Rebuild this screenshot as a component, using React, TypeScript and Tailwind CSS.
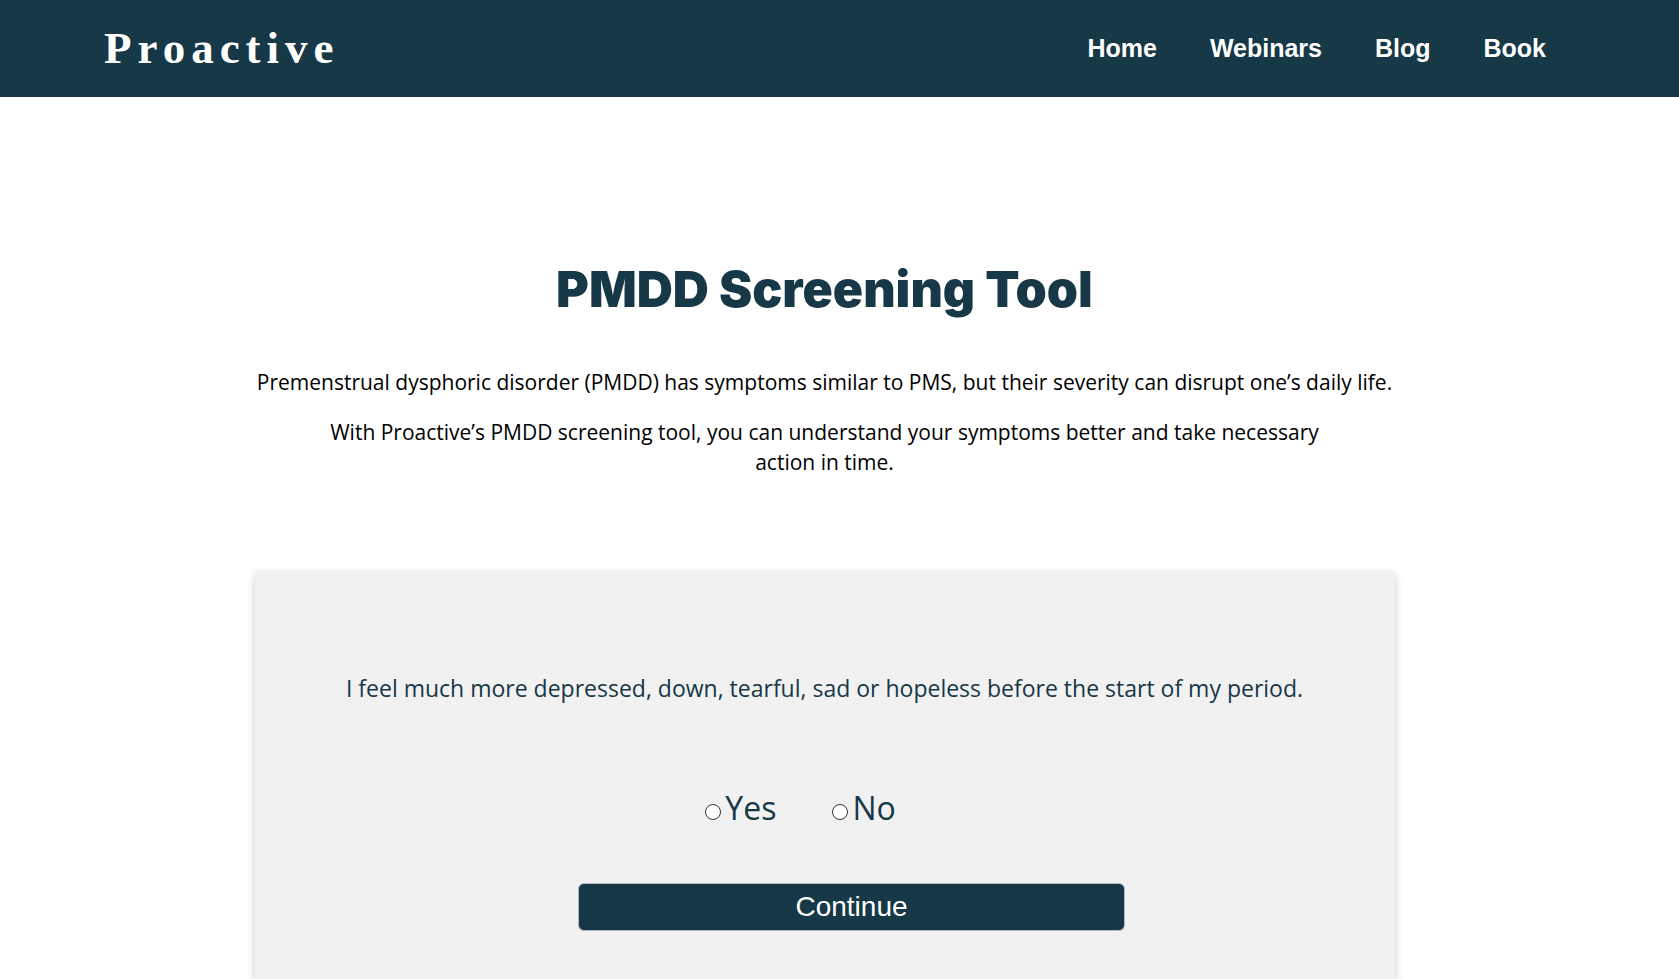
import React, { useState } from 'react';

const links = ['Home', 'Webinars', 'Blog', 'Book'];

export default function App() {
  const [answer, setAnswer] = useState('');
  return (
    <div className="flex min-h-screen flex-col bg-white font-['Open_Sans',sans-serif] text-black">
      <header className="flex h-[97px] items-center justify-between bg-[#163847] pr-[133px] pl-[104px] text-white">
        <a href="#" className="font-['Liberation_Serif',serif] text-[45px] leading-none font-bold tracking-[6px]">
          Proactive
        </a>
        <nav className="flex gap-[53px] font-['Liberation_Sans',sans-serif] text-[25px] font-bold">
          {links.map((label) => (
            <a key={label} href="#">{label}</a>
          ))}
        </nav>
      </header>
      <main className="mr-[30px] flex flex-1 flex-col items-center pt-40 text-center">
        <h1 className="font-['Inter',sans-serif] text-[50px] leading-16 font-black text-[#163847]">PMDD Screening Tool</h1>
        <p className="mt-[46px] text-[21px] leading-[30px]">
          Premenstrual dysphoric disorder (PMDD) has symptoms similar to PMS, but their severity can disrupt one’s daily life.
        </p>
        <p className="mt-5 max-w-[1000px] text-[21px] leading-[30px]">
          With Proactive’s PMDD screening tool, you can understand your symptoms better and take necessary action in time.
        </p>
        <form
          onSubmit={(e) => e.preventDefault()}
          className="mt-[93px] w-full max-w-[1140px] flex-1 rounded-t bg-[#f1f1f1] pt-[100px] pb-10 text-[#163847] shadow-[0_4px_8px_rgba(0,0,0,0.2)]"
        >
          <fieldset>
            <legend className="w-full text-center text-[23px] leading-9">
              I feel much more depressed, down, tearful, sad or hopeless before the start of my period.
            </legend>
            <div className="mt-20 mr-12 flex justify-center gap-14 text-[32px] leading-11">
              {['Yes', 'No'].map((option) => (
                <label key={option} className="flex items-center gap-1">
                  <input type="radio" name="answer" value={option} checked={answer === option} onChange={() => setAnswer(option)} className="mt-2 size-4 appearance-none rounded-full border border-[#333] bg-white checked:border-4 checked:border-[#163847]" />
                  {option}
                </label>
              ))}
            </div>
          </fieldset>
          <button className="mt-[53px] ml-[54px] h-12 w-[547px] rounded-md border border-[#b5b5c8] bg-[#163847] font-['Liberation_Sans',sans-serif] text-[28px] leading-none text-white">
            Continue
          </button>
        </form>
      </main>
    </div>
  );
}
